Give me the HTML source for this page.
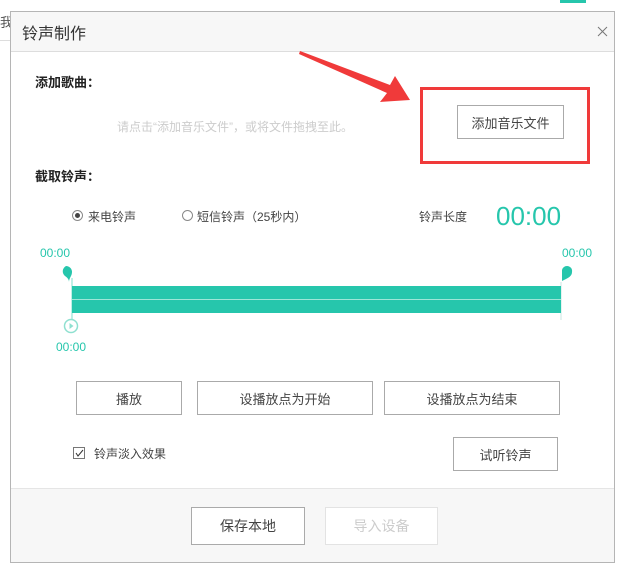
<!DOCTYPE html>
<html><head><meta charset="utf-8"><style>
*{margin:0;padding:0;box-sizing:border-box}
body{width:634px;height:574px;background:#fff;position:relative;overflow:hidden;font-family:"Liberation Sans","Noto Sans CJK SC",sans-serif;color:#333}
.a{position:absolute;white-space:nowrap}
.btn{position:absolute;border:1px solid #aaa;background:#fff;font-size:13px;color:#444;display:flex;align-items:center;justify-content:center}
.t{color:#26c6ac;font-size:12px}
</style></head><body>
<div class="a" style="left:0;top:40px;width:10px;height:1px;background:#ddd"></div>
<div class="a" style="left:0;top:12px;font-size:13px;color:#555">我</div>
<div class="a" style="left:560px;top:0;width:26px;height:3px;background:#26c6ac"></div>
<div class="a" style="left:10px;top:11px;height:552px;border:1px solid #b5b5b5;width:605px;background:#fff"></div>
<div class="a" style="left:11px;top:12px;width:603px;height:40px;background:#f7f7f7;border-bottom:1px solid #ddd"></div>
<div class="a" style="left:22px;top:20px;font-size:16px;color:#333">铃声制作</div>
<svg class="a" style="left:597px;top:26px" width="11" height="11"><path d="M1 1L10 10M10 1L1 10" stroke="#777" stroke-width="1"/></svg>
<div class="a" style="left:35px;top:72px;font-size:13px;font-weight:bold;color:#222">添加歌曲：</div>
<div class="a" style="left:117px;top:118px;font-size:12px;color:#ccc">请点击“添加音乐文件”，或将文件拖拽至此。</div>
<div class="btn" style="left:457px;top:105px;width:107px;height:34px">添加音乐文件</div>
<div class="a" style="left:420px;top:87px;width:170px;height:77px;border:3px solid #f03a3a"></div>
<svg class="a" style="left:0;top:0" width="634" height="200"><polygon points="300,51 390,85 395,76 410,100 380,102 387,93 299,54" fill="#f03a3a"/></svg>
<div class="a" style="left:35px;top:166px;font-size:13px;font-weight:bold;color:#222">截取铃声：</div>
<div class="a" style="left:72px;top:210px;width:11px;height:11px;border:1px solid #888;border-radius:50%"><div style="margin:2px;width:5px;height:5px;border-radius:50%;background:#444"></div></div>
<div class="a" style="left:88px;top:208px;font-size:12px;color:#444">来电铃声</div>
<div class="a" style="left:182px;top:210px;width:11px;height:11px;border:1px solid #888;border-radius:50%"></div>
<div class="a" style="left:197px;top:208px;font-size:12px;color:#444">短信铃声（25秒内）</div>
<div class="a" style="left:419px;top:208px;font-size:12px;color:#444">铃声长度</div>
<div class="a" style="left:496px;top:201px;font-size:26px;color:#26c6ac">00:00</div>
<div class="a t" style="left:40px;top:246px">00:00</div>
<div class="a t" style="left:562px;top:246px">00:00</div>
<svg class="a" style="left:60px;top:264px" width="14" height="20"><path d="M6 2a6 6 0 0 1 6 6c0 4-3 6-3 10c0-2-1-4-4-6a6 6 0 0 1 1-10z" fill="#26c6ac"/></svg>
<svg class="a" style="left:561px;top:264px" width="14" height="20"><path d="M6 2a5 5 0 0 1 5 6c0 3-2 5-6 7l-4 2V6a5 5 0 0 1 5-4z" fill="#26c6ac"/></svg>
<div class="a" style="left:71px;top:278px;width:2px;height:42px;background:#bff0e6"></div>
<div class="a" style="left:560px;top:282px;width:2px;height:38px;background:#e5f2f0"></div>
<div class="a" style="left:72px;top:286px;width:489px;height:27px;background:#26c6ac"></div>
<div class="a" style="left:72px;top:299px;width:489px;height:1px;background:#9ee6d8"></div>
<svg class="a" style="left:63px;top:318px" width="16" height="16"><circle cx="8" cy="8" r="6.5" fill="#fff" stroke="#8fe0d0" stroke-width="1.5"/><path d="M6.5 5l4 3-4 3z" fill="#8fe0d0"/></svg>
<div class="a t" style="left:56px;top:340px">00:00</div>
<div class="btn" style="left:76px;top:381px;width:106px;height:34px">播放</div>
<div class="btn" style="left:197px;top:381px;width:176px;height:34px">设播放点为开始</div>
<div class="btn" style="left:384px;top:381px;width:176px;height:34px">设播放点为结束</div>
<div class="a" style="left:73px;top:447px;width:12px;height:12px;border:1px solid #777"></div>
<svg class="a" style="left:74px;top:448px" width="10" height="10"><path d="M2 5l2 3 5-6" stroke="#333" fill="none"/></svg>
<div class="a" style="left:94px;top:445px;font-size:12px;color:#444">铃声淡入效果</div>
<div class="btn" style="left:453px;top:437px;width:105px;height:34px">试听铃声</div>
<div class="a" style="left:11px;top:488px;width:603px;height:74px;background:#f7f7f7;border-top:1px solid #e5e5e5"></div>
<div class="btn" style="left:191px;top:507px;width:114px;height:38px;font-size:14px">保存本地</div>
<div class="btn" style="left:325px;top:507px;width:113px;height:38px;font-size:14px;border-color:#e3e3e3;color:#ccc">导入设备</div>
</body></html>
